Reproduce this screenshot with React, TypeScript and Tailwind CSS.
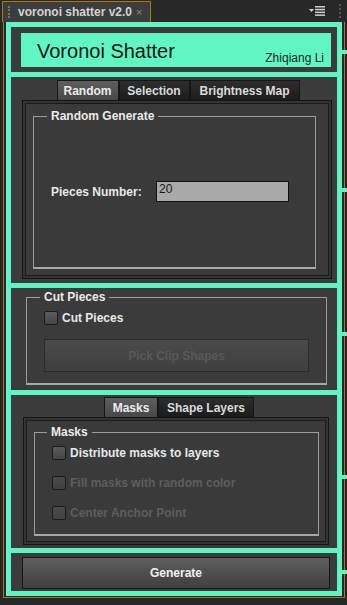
import React from 'react';

const GREEN = 'border-[#5ff5c3]';

const Checkbox: React.FC<{ label: string; disabled?: boolean }> = ({ label, disabled }) => (
  <div className="flex items-center h-[14px]">
    <span
      className={`w-[14px] h-[14px] rounded-[2px] border border-[#1a1a1a] ${
        disabled ? 'bg-gradient-to-b from-[#4a4a4a] to-[#424242]' : 'bg-gradient-to-b from-[#5c5c5c] to-[#464646]'
      }`}
    />
    <span className={`ml-[4px] text-[12px] font-bold ${disabled ? 'text-[#5e5e5e]' : 'text-[#e8e8e8]'}`}>{label}</span>
  </div>
);

const Tab: React.FC<{ label: string; active?: boolean; w: string }> = ({ label, active, w }) => (
  <div
    className={`${w} h-[20px] flex items-center justify-center text-[12px] font-bold border border-b-0 border-[#151515] ${
      active
        ? 'bg-gradient-to-b from-[#5e5e5e] to-[#474747] text-[#ececec]'
        : 'bg-gradient-to-b from-[#2e2e2e] to-[#1b1b1b] text-[#dadada]'
    }`}
  >
    {label}
  </div>
);

const Legend: React.FC<{ text: string; ml: string }> = ({ text, ml }) => (
  <legend className={`${ml} px-[4px] text-[12px] leading-[14px] font-bold text-[#eaeaea]`}>{text}</legend>
);

export default function App() {
  return (
    <div className="relative w-[347px] h-[605px] bg-[#262626] overflow-hidden font-['Liberation_Sans',Arial,sans-serif]">
      {/* panel tab bar */}
      <div className="h-[22px] flex items-end bg-[#282828]">
        <div className="ml-[2px] w-[149px] h-[21px] flex items-center bg-[#3c3c3c] border-l border-t border-r border-[#a8781f]">
          <div className="ml-[5px] w-[2px] h-[12px] border-l-2 border-dotted border-[#777]" />
          <span className="ml-[8px] text-[12px] font-bold text-[#d4d4d4]">voronoi shatter v2.0</span>
          <span className="ml-[4px] text-[11px] text-[#8a8a8a]">×</span>
        </div>
        <div className="flex-1" />
        <div className="self-center flex items-center mr-[14px] mb-[1px]">
          <svg width="16" height="10" viewBox="0 0 16 10">
            <polygon points="0,3 5,3 2.5,6" fill="#cfcfcf" />
            <rect x="6" y="0" width="10" height="1.5" fill="#cfcfcf" />
            <rect x="6" y="2.8" width="10" height="1.5" fill="#cfcfcf" />
            <rect x="6" y="5.6" width="10" height="1.5" fill="#cfcfcf" />
            <rect x="6" y="8.4" width="10" height="1.5" fill="#cfcfcf" />
          </svg>
        </div>
        <div className="self-center mr-[6px] w-[2px] h-[14px] border-l-2 border-dotted border-[#555]" />
      </div>

      {/* panel body */}
      <div className="mx-[3px] w-[342px] border-x border-b border-[#a8781f] pl-[2px] pr-[2px] pb-[1px] bg-[#262626]">
        <div className={`border-[5px] ${GREEN} bg-[#3b3b3b] flex flex-col`}>
          {/* header */}
          <div className="h-[45px] pl-[10px] pr-[6px] pt-[6px] pb-[5px]">
            <div className="h-full bg-[#60f6c4] flex items-end justify-between pl-[16px] pr-[7px]">
              <span className="text-[20px] leading-[24px] mb-[4px] text-[#151515]">Voronoi Shatter</span>
              <span className="text-[12px] leading-[14px] mb-[2px] text-[#1e1e1e]">Zhiqiang Li</span>
            </div>
          </div>

          {/* random */}
          <div className={`h-[211px] border-t-[5px] ${GREEN} pt-[3px] pl-[11px] pr-[5px] flex flex-col`}>
            <div className="flex justify-center pl-[2px]">
              <Tab label="Random" active w="w-[62px]" />
              <Tab label="Selection" w="w-[71px]" />
              <Tab label="Brightness Map" w="w-[110px]" />
            </div>
            <div className="h-[179px] border border-[#141414] p-[2px] bg-[#333]">
              <div className="h-full border border-[#1a1a1a] bg-[#3a3a3a] pl-[7px] pr-[12px] pt-[5px]">
                <fieldset className="h-[160px] border border-b-2 border-[#9c9c9c] border-b-[#a8a8a8]">
                  <Legend text="Random Generate" ml="ml-[13px]" />
                  <div className="mt-[58px] flex items-center">
                    <span className="ml-[17px] w-[105px] text-[12px] font-bold text-[#e8e8e8]">Pieces Number:</span>
                    <div className="w-[133px] h-[21px] bg-[#a9a9a9] border border-[#111] pl-[2px] text-[12px] leading-[14px] text-[#1a1a1a]">
                      20
                    </div>
                  </div>
                </fieldset>
              </div>
            </div>
          </div>

          {/* cut pieces */}
          <div className={`h-[107px] border-t-[5px] ${GREEN} pt-[2px] pl-[15px] pr-[10px] pb-[5px]`}>
            <fieldset className="h-full border border-b-2 border-[#9c9c9c] border-b-[#a8a8a8] pl-[17px]">
              <Legend text="Cut Pieces" ml="ml-[-4px]" />
              <div className="mt-[7px]">
                <Checkbox label="Cut Pieces" />
              </div>
              <div className="mt-[14px] w-[265px] h-[33px] flex items-center justify-center bg-gradient-to-b from-[#4a4a4a] to-[#3f3f3f] border border-[#2a2a2a] text-[12px] font-bold text-[#595959]">
                Pick Clip Shapes
              </div>
            </fieldset>
          </div>

          {/* masks */}
          <div className={`h-[158px] border-t-[5px] ${GREEN} pt-[2px] pl-[12px] pr-[8px] flex flex-col`}>
            <div className="flex justify-center pl-[6px]">
              <Tab label="Masks" active w="w-[54px]" />
              <Tab label="Shape Layers" w="w-[96px]" />
            </div>
            <div className="h-[128px] border border-[#141414] p-[2px] bg-[#333]">
              <div className="h-full border border-[#1a1a1a] bg-[#3a3a3a] pl-[7px] pr-[6px] pt-[4px]">
                <fieldset className="h-[111px] border border-b-2 border-[#9c9c9c] border-b-[#a8a8a8] pl-[17px]">
                  <Legend text="Masks" ml="ml-[-5px]" />
                  <div className="mt-[7px] flex flex-col gap-[16px]">
                    <Checkbox label="Distribute masks to layers" />
                    <Checkbox label="Fill masks with random color" disabled />
                    <Checkbox label="Center Anchor Point" disabled />
                  </div>
                </fieldset>
              </div>
            </div>
          </div>

          {/* generate */}
          <div className={`h-[43px] border-t-[5px] ${GREEN} pt-[4px] pl-[11px] pr-[7px] pb-[2px]`}>
            <div className="h-full flex items-center justify-center bg-gradient-to-b from-[#5e5e5e] to-[#3f3f3f] border border-[#151515] text-[12px] font-bold text-[#f0f0f0]">
              Generate
            </div>
          </div>
        </div>
      </div>

      {/* green connector stubs on the right edge */}
      <div className="absolute left-[342px] top-[50px] w-[5px] h-[4px] bg-[#5ff5c3]" />
      <div className="absolute left-[342px] top-[188px] w-[5px] h-[4px] bg-[#5ff5c3]" />
      <div className="absolute left-[342px] top-[332px] w-[5px] h-[4px] bg-[#5ff5c3]" />
      <div className="absolute left-[342px] top-[475px] w-[5px] h-[4px] bg-[#5ff5c3]" />
      <div className="absolute left-[342px] top-[570px] w-[5px] h-[4px] bg-[#5ff5c3]" />
    </div>
  );
}
